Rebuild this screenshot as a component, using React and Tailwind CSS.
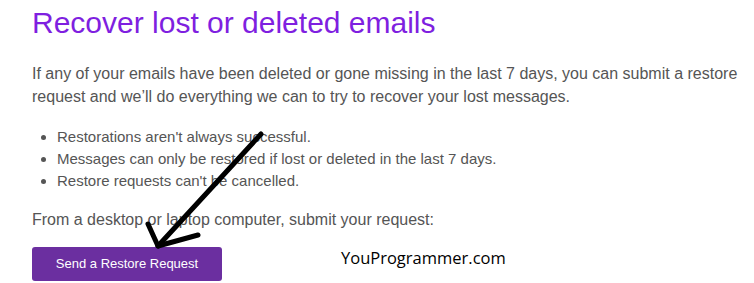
import React from "react";

const bullets = [
  "Restorations aren't always successful.",
  "Messages can only be restored if lost or deleted in the last 7 days.",
  "Restore requests can't be cancelled.",
];

const Arrow = () => (
  <svg
    className="absolute left-0 top-0 pointer-events-none"
    width="754"
    height="283"
    viewBox="0 0 754 283"
  >
    <g stroke="#000" strokeWidth="5" strokeLinecap="round" strokeLinejoin="round" fill="none">
      <path d="M261 134 L158 246" />
      <path d="M148 224 L158 246 L198 235" />
    </g>
  </svg>
);

export default function App() {
  return (
    <div className="relative w-[754px] h-[283px] overflow-hidden bg-white font-['Liberation_Sans',Arial,sans-serif]">
      <div className="pl-8 pr-3 pt-[5px]">
        <h1 className="text-[30px] leading-[36px] text-[#7f1fe0]">
          Recover lost or deleted emails
        </h1>
        <p className="mt-[21px] text-[16px] leading-[23px] text-[#555]">
          If any of your emails have been deleted or gone missing in the last 7 days, you can submit a restore
          request and we’ll do everything we can to try to recover your lost messages.
        </p>
        <ul className="mt-[18px] pl-[25px] list-disc text-[15px] leading-[22px] text-[#555]">
          {bullets.map((b) => (
            <li key={b}>{b}</li>
          ))}
        </ul>
        <p className="mt-[16px] text-[16px] leading-[23px] text-[#555]">
          From a desktop or laptop computer, submit your request:
        </p>
        <div className="mt-[16px] flex items-start">
          <button className="w-[190px] h-[34px] rounded-[3px] bg-[#6b2fa0] text-white text-[13px]">
            Send a Restore Request
          </button>
          <span className="ml-[119px] mt-[-1px] font-['Open_Sans',sans-serif] text-[16.5px] text-black">
            YouProgrammer.com
          </span>
        </div>
      </div>
      <Arrow />
    </div>
  );
}
